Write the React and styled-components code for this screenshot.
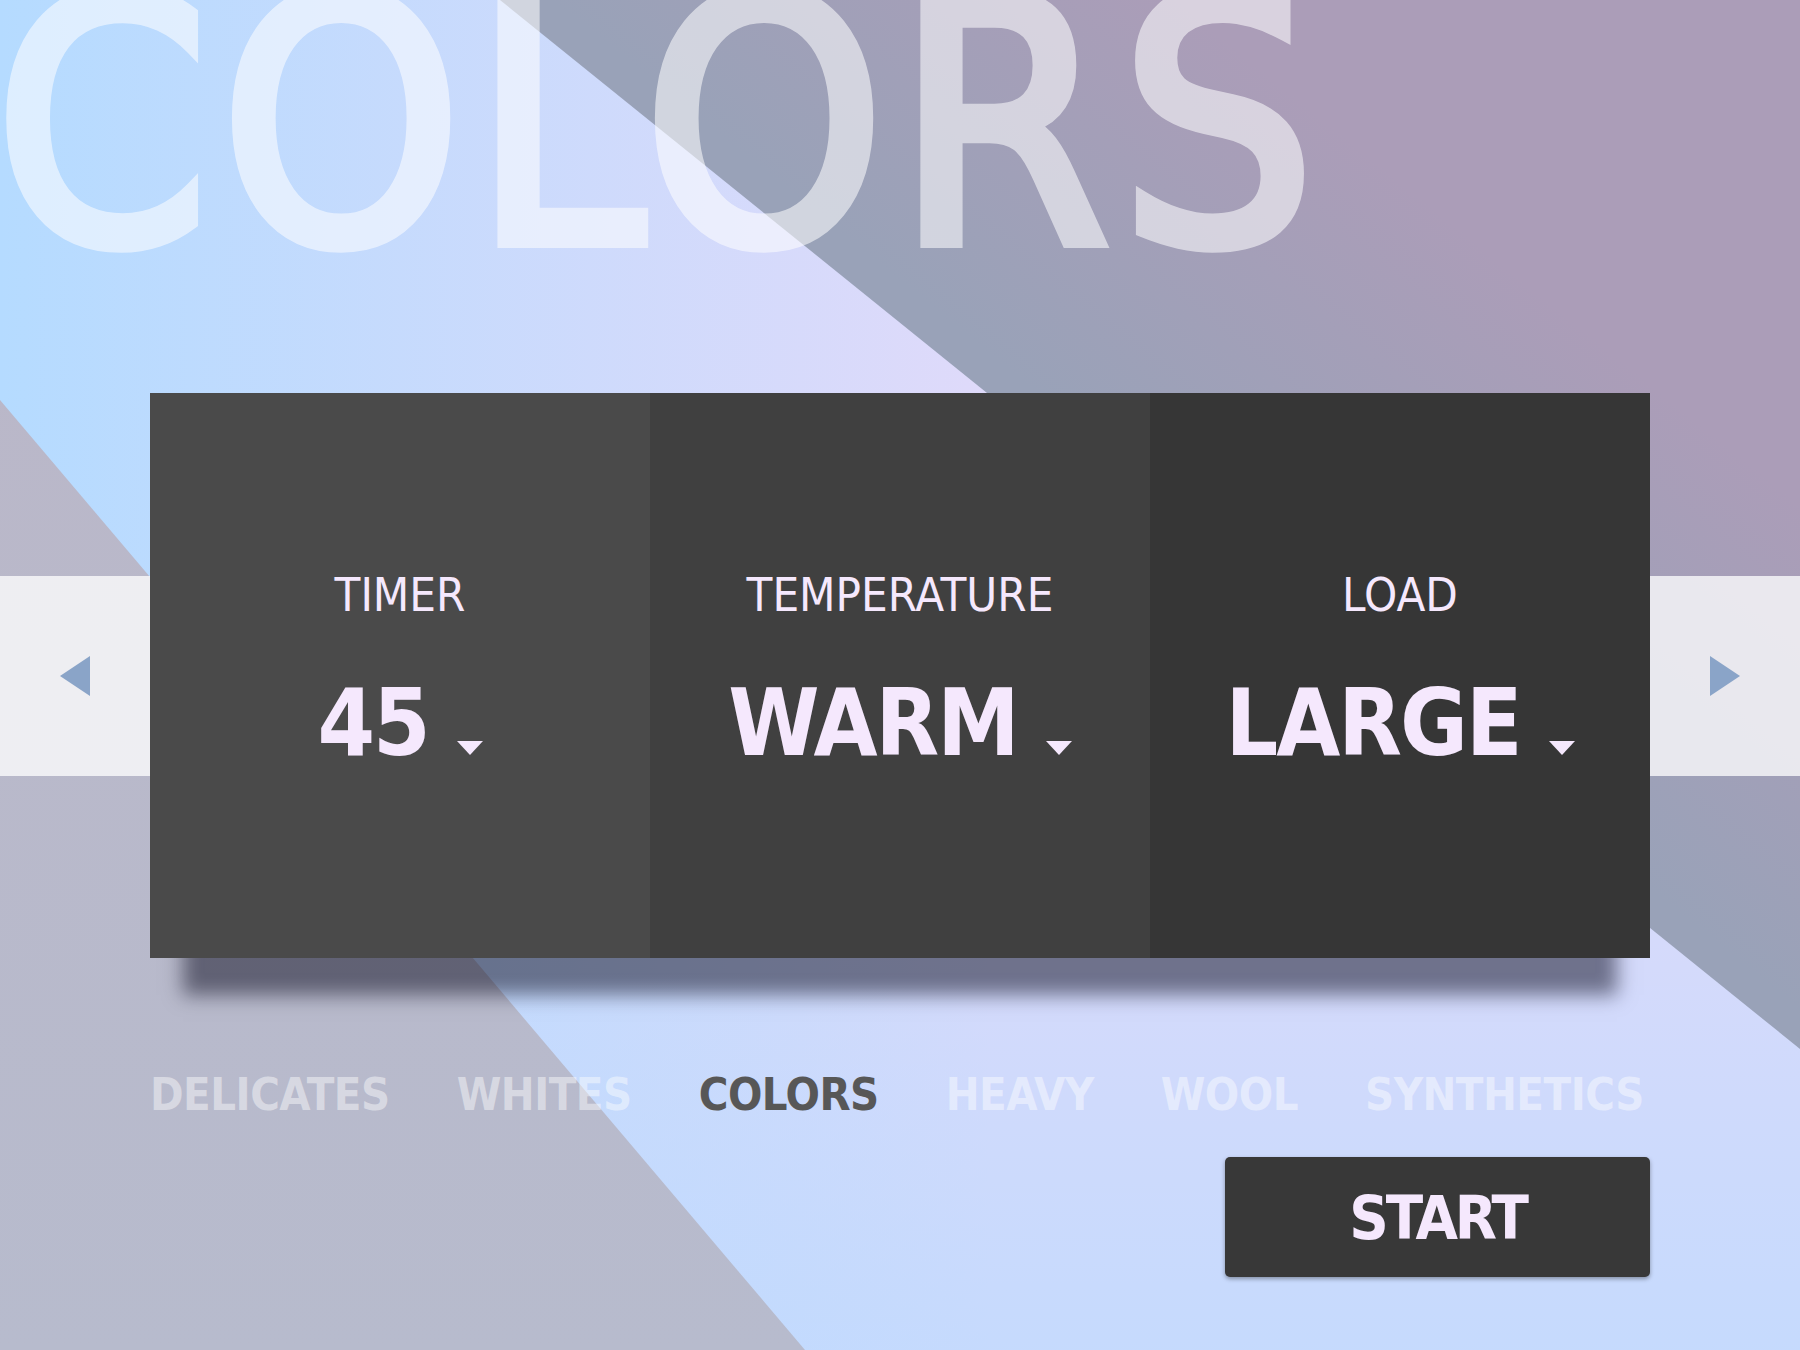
import React from 'react';
import styled, { createGlobalStyle } from 'styled-components';

const GlobalStyle = createGlobalStyle`
  html, body {
    margin: 0;
    padding: 0;
  }
  body {
    font-family: "DejaVu Sans Condensed", "DejaVu Sans", sans-serif;
  }
`;

const Page = styled.div`
  position: relative;
  width: 1800px;
  height: 1350px;
  overflow: hidden;
  background:
    linear-gradient(180deg, rgba(184, 218, 255, 0) 50%, rgba(184, 218, 255, 0.65) 100%),
    linear-gradient(90deg, #b5dbff 0%, #dfdafa 55%, #dfdafa 100%);

  &::before {
    content: '';
    position: absolute;
    inset: 0;
    background: linear-gradient(39deg, #99a2b8 64%, #ab9db8 82%);
    clip-path: polygon(500px 0, 100% 0, 100% 1049px);
  }

  &::after {
    content: '';
    position: absolute;
    inset: 0;
    background: linear-gradient(to bottom, #bbb6c7, #b7bbcd);
    clip-path: polygon(0 400px, 805px 1350px, 0 1350px);
  }
`;

const Content = styled.div`
  position: relative;
  z-index: 1;
`;

const Title = styled.h1`
  margin: -46px 0 0 -5px;
  height: 340px;
  font-size: 340px;
  line-height: 1;
  font-weight: 400;
  letter-spacing: 12px;
  color: #fff;
  -webkit-text-stroke: 12px #fff;
  opacity: 0.55;
  white-space: nowrap;
`;

const MainRow = styled.div`
  display: flex;
  align-items: center;
  margin-top: 99px;
`;

const SideBar = styled.div`
  width: 150px;
  height: 200px;
  background: rgba(255, 255, 255, 0.76);
  display: flex;
  align-items: center;
  justify-content: ${p => (p.$side === 'left' ? 'flex-start' : 'flex-end')};
  padding: 0 60px;
  box-sizing: border-box;
`;

const Panel = styled.div`
  display: grid;
  grid-template-columns: repeat(3, 500px);
  height: 565px;
  box-shadow: 0 70px 18px -33px rgba(10, 10, 30, 0.5);
`;

const Column = styled.div`
  background: ${p => p.$bg};
  display: flex;
  flex-direction: column;
  align-items: center;
  padding-top: 178px;
  color: #f5e8fd;
`;

const Label = styled.div`
  font-size: 47px;
  line-height: 1;
`;

const ValueRow = styled.div`
  display: flex;
  align-items: baseline;
  margin-top: 60px;
`;

const Value = styled.div`
  font-size: 92px;
  line-height: 1;
  font-weight: 700;
  letter-spacing: -2px;
`;

const Caret = styled.svg`
  margin-left: 28px;
  fill: #f5e8fd;
`;

const Tabs = styled.nav`
  display: flex;
  gap: 67px;
  padding-left: 150px;
  margin-top: 114px;
`;

const Tab = styled.span`
  font-size: 45px;
  line-height: 1;
  font-weight: 700;
  letter-spacing: -0.5px;
  color: ${p => (p.$active ? '#575757' : 'rgba(255, 255, 255, 0.45)')};
`;

const ButtonRow = styled.div`
  display: flex;
  justify-content: flex-end;
  padding-right: 150px;
  margin-top: 40px;
`;

const StartButton = styled.button`
  width: 425px;
  height: 120px;
  border: none;
  border-radius: 5px;
  background: #383838;
  box-shadow: 0 2px 4px rgba(0, 0, 0, 0.35);
  color: #f5e8fd;
  font-family: inherit;
  font-size: 61px;
  line-height: 1;
  font-weight: 700;
  letter-spacing: -3px;
  cursor: pointer;
`;

const Arrow = ({ dir }) => (
  <svg width="30" height="40" viewBox="0 0 30 40">
    <polygon
      fill="#8aa4c8"
      points={dir === 'left' ? '30,0 30,40 0,20' : '0,0 0,40 30,20'}
    />
  </svg>
);

const settings = [
  { label: 'TIMER', value: '45', bg: '#4a4a4a' },
  { label: 'TEMPERATURE', value: 'WARM', bg: '#404040' },
  { label: 'LOAD', value: 'LARGE', bg: '#363636' },
];

const cycles = ['DELICATES', 'WHITES', 'COLORS', 'HEAVY', 'WOOL', 'SYNTHETICS'];

const App = () => {
  return (
    <>
      <GlobalStyle />
      <Page>
        <Content>
          <Title>COLORS</Title>
          <MainRow>
            <SideBar $side="left">
              <Arrow dir="left" />
            </SideBar>
            <Panel>
              {settings.map(s => (
                <Column key={s.label} $bg={s.bg}>
                  <Label>{s.label}</Label>
                  <ValueRow>
                    <Value>{s.value}</Value>
                    <Caret width="26" height="14" viewBox="0 0 26 14">
                      <polygon points="0,0 26,0 13,14" />
                    </Caret>
                  </ValueRow>
                </Column>
              ))}
            </Panel>
            <SideBar $side="right">
              <Arrow dir="right" />
            </SideBar>
          </MainRow>
          <Tabs>
            {cycles.map(c => (
              <Tab key={c} $active={c === 'COLORS'}>{c}</Tab>
            ))}
          </Tabs>
          <ButtonRow>
            <StartButton>START</StartButton>
          </ButtonRow>
        </Content>
      </Page>
    </>
  );
};

export default App;
